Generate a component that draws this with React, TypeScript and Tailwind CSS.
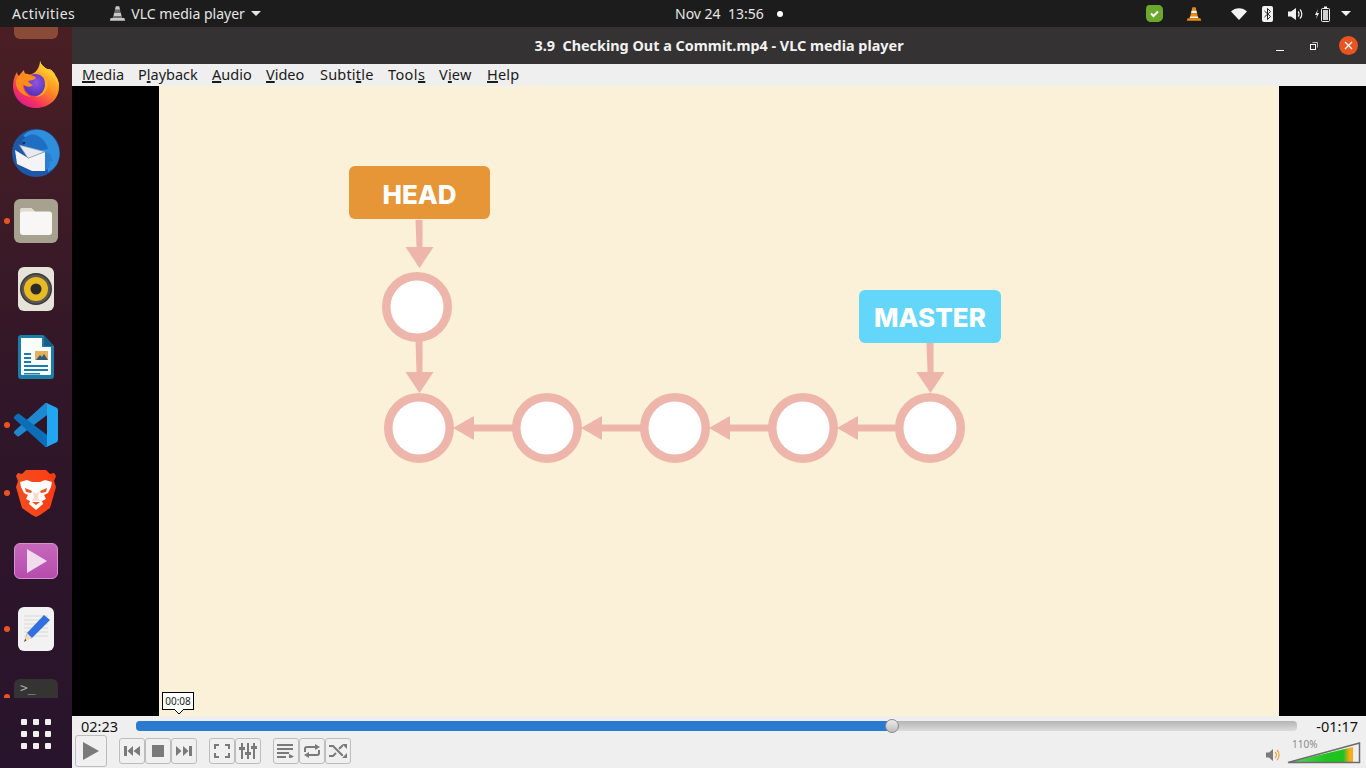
import React from "react";

function VlcCone({ color = false, size = 20 }: { color?: boolean; size?: number }) {
  const a = color ? "#f08a00" : "#c9c9c9";
  const b = color ? "#f6f1ea" : "#6f6f6f";
  return (
    <svg width={size} height={size} viewBox="0 0 20 20">
      <path d="M8 1.500h4l1 4H7z" fill={a} />
      <path d="M7 5.500h6l1 4H6z" fill={b} />
      <path d="M6 9.500h8l1 5H5z" fill={a} />
      <path d="M5.200 13h9.600l1 2.400H4.200z" fill={b} />
      <path d="M2 15.200h16l1 3.300H1z" fill={a} />
    </svg>
  );
}

function Firefox() {
  return (
    <svg width="46" height="47" viewBox="0 0 46 47" className="-mt-[2px]">
      <defs>
        <linearGradient id="ff1" x1="0.8" y1="0.05" x2="0.2" y2="0.95">
          <stop offset="0" stopColor="#ffe03b" />
          <stop offset="0.45" stopColor="#ff8a1f" />
          <stop offset="0.8" stopColor="#f5305f" />
          <stop offset="1" stopColor="#d51f95" />
        </linearGradient>
        <radialGradient id="ff2" cx="0.55" cy="0.4" r="0.7">
          <stop offset="0" stopColor="#8f55e0" />
          <stop offset="1" stopColor="#4a2ab5" />
        </radialGradient>
      </defs>
      <path d="M27 0c1 4 4 6 7 8 3 0 5 1 6 3 1 1 2 2 2 3 3 4 4 8 4 12 0 12-10 21-23 21C10 47 0 37 0 25c0-5 1-9 4-14 0 2 1 3 2 4 1-2 3-4 5-6 0 3 2 5 5 5 3-1 6-2 8-5 2-3 3-6 3-9z" fill="url(#ff1)" />
      <circle cx="22" cy="24" r="11" fill="url(#ff2)" />
      <path d="M3 20c2-6 7-8 12-7 3 1 7 2 8 4-2 2-5 2-8 3 1 2 3 3 5 4-3 3-8 2-10-1-1 4 2 10 8 13-9-1-16-8-15-16z" fill="#ff8c1a" />
      <path d="M27 0c1 4 4 6 7 8 3 0 5 1 6 3 1 1 2 2 2 3 3 4 4 8 4 12-2-6-5-10-10-13-3-1-6-2-7-3-2-3-2-7-2-10z" fill="#ffc92e" />
      <path d="M29 13c5 4 7 9 5 15-2 5-7 8-12 8 6-2 9-6 10-11 0-5-1-9-3-12z" fill="#ffab1f" />
    </svg>
  );
}

function Thunderbird() {
  return (
    <svg width="48" height="48" viewBox="0 0 48 48">
      <circle cx="24" cy="24" r="24" fill="#1c57a8" />
      <path d="M11 7C18-1 31-1 39 6c8 7 11 19 6 29-2 3-5 6-9 8-1-8-2-14-5-20-4-7-13-13-20-16z" fill="#2f8fdd" />
      <path d="M10 12c4-6 11-8 16-5 5 2 9 8 10 13l-20 4z" fill="#1e6fc4" />
      <path d="M3 21l13 8 17-6v19H20L5 35z" fill="#f4f4f6" />
      <path d="M7.300 16L33 22.700 16 29.300z" fill="#e8eaf0" stroke="#8a98ac" strokeWidth="0.700" />
      <path d="M33 23l5 2 3 7-4 1 1 5-5 4z" fill="#2a7fd2" />
      <circle cx="12" cy="14" r="1.300" fill="#1b2f55" />
    </svg>
  );
}

function Files() {
  return (
    <div className="w-11 h-11 rounded-md bg-[#a7a290] flex items-center justify-center">
      <svg width="32" height="28" viewBox="0 0 32 28">
        <path d="M0 4a3 3 0 0 1 3-3h8l4 3.500h14a3 3 0 0 1 3 3V25a3 3 0 0 1-3 3H3a3 3 0 0 1-3-3z" fill="#f8f7f5" />
        <path d="M0 4a3 3 0 0 1 3-3h8l4 3.500H3a3 3 0 0 0-3 3z" fill="#dedad0" />
      </svg>
    </div>
  );
}

function Rhythmbox() {
  return (
    <div className="w-9 h-11 rounded-md bg-[#e6e3d8] flex items-center justify-center">
      <svg width="32" height="32" viewBox="0 0 32 32">
        <circle cx="16" cy="16" r="16" fill="#3b3a38" />
        <circle cx="16" cy="16" r="14.500" fill="#5a5853" />
        <circle cx="16" cy="16" r="12" fill="#e8bb24" />
        <circle cx="16" cy="16" r="5.500" fill="#2b2a28" />
      </svg>
    </div>
  );
}

function Writer() {
  return (
    <svg width="36" height="46" viewBox="0 0 36 46">
      <path d="M3 1h22l11 11v30a3 3 0 0 1-3 3H3a3 3 0 0 1-3-3V4a3 3 0 0 1 3-3z" fill="#1b7ea8" />
      <path d="M3 4h21v9h9v27a1 1 0 0 1-1 1H4a1 1 0 0 1-1-1z" fill="#fbfdfd" />
      <path d="M26 1l10 11h-10z" fill="#14608a" />
      <rect x="17" y="17" width="13" height="9" fill="#e2b25a" />
      <path d="M18 26l4-5 2 2 2-3 4 6z" fill="#335b78" />
      <path d="M6 19h7v2H6zM6 23h7v2H6zM6 27h7v2H6zM6 31h24v2H6zM6 35h24v2H6zM6 39h16v1.500H6z" fill="#1b7ea8" />
    </svg>
  );
}

function VSCode() {
  return (
    <svg width="44" height="44" viewBox="0 0 100 100">
      <path d="M96.460 10.800 75.860.870a6.230 6.230 0 0 0-7.100 1.200L1.360 63.580a4.170 4.170 0 0 0 0 6.160l5.510 5.010a4.160 4.160 0 0 0 5.320.240L93.400 13.400c2.700-2.100 6.600-.150 6.600 3.300v-.270a6.250 6.250 0 0 0-3.540-5.630z" fill="#1f88cf" />
      <path d="M96.460 89.200 75.860 99.130a6.230 6.230 0 0 1-7.100-1.200L1.360 36.420a4.170 4.170 0 0 1 0-6.160l5.510-5.010a4.160 4.160 0 0 1 5.320-.240L93.400 86.600c2.700 2.100 6.600.150 6.600-3.300v.270a6.250 6.250 0 0 1-3.540 5.630z" fill="#0a6fb8" />
      <path d="M75.860 99.130a6.230 6.230 0 0 1-7.100-1.200c2.300 2.300 6.240.670 6.240-2.580V4.650c0-3.250-3.940-4.880-6.240-2.580a6.230 6.230 0 0 1 7.100-1.200l20.600 9.920a6.250 6.250 0 0 1 3.540 5.630v67.160a6.250 6.250 0 0 1-3.540 5.630z" fill="#22a6f0" />
    </svg>
  );
}

function Brave() {
  return (
    <svg width="40" height="47" viewBox="0 0 40 47">
      <defs>
        <linearGradient id="br" x1="0" y1="0" x2="1" y2="0">
          <stop offset="0" stopColor="#f1501f" />
          <stop offset="1" stopColor="#ff3a12" />
        </linearGradient>
      </defs>
      <path d="M10 0h20l4 4 4-1 2 3-2 5 2 6-6 21-10 7-4 2-4-2-10-7L0 17l2-6-2-5 2-3 4 1z" fill="url(#br)" />
      <path d="M4 12l7-2 5 2h8l5-2 7 2-1 5-3 6-4 2 2 4-4 2 1 3-7 6-7-6 1-3-4-2 2-4-4-2-3-6z" fill="#fff" />
      <path d="M9 18l7 3-1 2-5-1zM31 18l-7 3 1 2 5-1z" fill="#f1501f" />
      <path d="M17 21l3 3 3-3-1 7 2 3h-8l2-3z" fill="#ffd9cc" />
      <path d="M16 32h8l-4 3z" fill="#f1501f" />
    </svg>
  );
}

function VideoIcon() {
  return (
    <div className="w-11 h-9 rounded-md border border-[#d88fd0] bg-gradient-to-b from-[#c568b9] to-[#b64cae] flex items-center justify-center">
      <svg width="20" height="24" viewBox="0 0 20 24" className="ml-[2px]">
        <path d="M0 0l20 12L0 24z" fill="#f0dcee" />
      </svg>
    </div>
  );
}

function Editor() {
  return (
    <div className="w-9 h-11 rounded-md bg-[#f2f2f2] flex items-center justify-center">
      <svg width="32" height="30" viewBox="0 0 32 30">
        <path d="M4 2h24M4 6h24M4 10h24M4 14h24M4 18h24M4 22h24" stroke="#d8d8d8" strokeWidth="1" />
        <path d="M24 1l6 5-18 18-7 2 2-7z" fill="#2f6fe0" />
        <path d="M7 19l5 5-7 3z" fill="#fad9b5" />
        <path d="M5 25l1.500 1.200L4 28z" fill="#444" />
      </svg>
    </div>
  );
}

function Terminal() {
  return (
    <div className="w-11 h-9 rounded-md bg-[#353433] pl-[6px] text-[13px] leading-[18px] text-[#a8a8a8] font-['DejaVu_Sans_Mono',monospace]">
      {">_"}
    </div>
  );
}

function DockSlot({ dot, children }: { dot?: boolean; children?: React.ReactNode }) {
  return (
    <div className="relative h-[68px] shrink-0 flex items-center justify-center">
      {dot && <span className="absolute left-[4px] top-[31px] w-[6px] h-[6px] rounded-full bg-[#e95420]" />}
      {children}
    </div>
  );
}

function Dock() {
  return (
    <aside className="w-[72px] shrink-0 flex flex-col h-full bg-gradient-to-b from-[#4a1f24] via-[#301628] to-[#28142c]">
      <div className="flex-1 min-h-0 overflow-hidden">
        <div className="flex flex-col -mt-[44px]">
          <DockSlot><div className="w-11 h-11 rounded-md bg-[#8a4a38]" /></DockSlot>
          <DockSlot><Firefox /></DockSlot>
          <DockSlot><Thunderbird /></DockSlot>
          <DockSlot dot><Files /></DockSlot>
          <DockSlot><Rhythmbox /></DockSlot>
          <DockSlot><Writer /></DockSlot>
          <DockSlot dot><VSCode /></DockSlot>
          <DockSlot dot><Brave /></DockSlot>
          <DockSlot><VideoIcon /></DockSlot>
          <DockSlot dot><Editor /></DockSlot>
          <DockSlot dot><Terminal /></DockSlot>
        </div>
      </div>
      <div className="h-[70px] pt-[2px] shrink-0 flex items-center justify-center">
        <div className="grid grid-cols-3 gap-[6px]">
          {Array.from({ length: 9 }).map((_, i) => (
            <span key={i} className="w-[6px] h-[6px] rounded-[1px] bg-[#f2f0ee]" />
          ))}
        </div>
      </div>
    </aside>
  );
}

function TopBar() {
  return (
    <header className="h-[27px] shrink-0 bg-[#1c1c1c] flex items-center text-[14px] text-[#e6e6e6] relative">
      <span className="ml-[12px] tracking-[0.5px]">Activities</span>
      <span className="ml-[34px] flex items-center">
        <VlcCone size={17} />
      </span>
      <span className="ml-[5px]">VLC media player</span>
      <span className="ml-[6px] w-0 h-0 border-x-[5px] border-x-transparent border-t-[5px] border-t-[#e6e6e6]" />
      <div className="absolute left-[675px] top-0 h-[27px] flex items-center whitespace-pre">
        <span>Nov 24  13:56</span>
        <span className="ml-[13px] w-[6px] h-[6px] rounded-full bg-white" />
      </div>
      <div className="ml-auto flex items-center">
        <svg width="17" height="17" viewBox="0 0 17 17">
          <path d="M3 0h9c3 0 5 2 5 5v7c0 3-3 5-6 5H5c-3 0-5-2-5-5V4c0-2 1-4 3-4z" fill="#6aa82e" />
          <path d="M5 8.500l2.500 2.500L12 6.500" stroke="#fff" strokeWidth="2" fill="none" />
        </svg>
        <span className="ml-[23px] flex"><VlcCone color size={16} /></span>
        <svg className="ml-[29px]" width="16" height="12" viewBox="0 0 16 12">
          <path d="M0 3.500C4-1 12-1 16 3.500L8 12z" fill="#f2f2f2" />
        </svg>
        <div className="ml-[15px] w-[11px] h-[16px] rounded-[2px] bg-[#f2f2f2] flex items-center justify-center">
          <svg width="7" height="12" viewBox="0 0 7 12">
            <path d="M0.500 3l6 5.500-3 3V.500l3 3-6 5.500" stroke="#222" strokeWidth="1" fill="none" />
          </svg>
        </div>
        <svg className="ml-[15px]" width="15" height="14" viewBox="0 0 15 14">
          <path d="M0 4.500h3L8 1v12L3 9.500H0z" fill="#f2f2f2" />
          <path d="M10 4.500a3.500 3.500 0 0 1 0 5M12 2.500a6.500 6.500 0 0 1 0 9" stroke="#f2f2f2" strokeWidth="1.200" fill="none" />
        </svg>
        <svg className="ml-[12px]" width="15" height="16" viewBox="0 0 15 16">
          <path d="M3 3L0 9h2L1 13l3-6H2z" fill="#f2f2f2" />
          <rect x="6.500" y="2.500" width="8" height="13" rx="1" fill="none" stroke="#f2f2f2" />
          <rect x="8" y="4" width="5" height="10" fill="#cfcfcf" />
          <rect x="9" y="0.500" width="3" height="2" fill="#f2f2f2" />
        </svg>
        <span className="ml-[11px] mr-[15px] w-0 h-0 border-x-[5px] border-x-transparent border-t-[5px] border-t-[#f2f2f2]" />
      </div>
    </header>
  );
}

function TitleBar() {
  return (
    <div className="h-[37px] shrink-0 bg-[#343232] relative flex items-center justify-center text-[14.400px] font-bold text-[#f2f2f2] whitespace-pre">
      <span className="mt-[1px]">3.9  Checking Out a Commit.mp4 - VLC media player</span>
      <div className="absolute right-[8px] top-0 h-full flex items-center">
        <span className="w-[8px] h-[1px] bg-white mt-[10px]" />
        <svg className="ml-[26px] mt-[1px]" width="8" height="8" viewBox="0 0 8 8">
          <rect x="0.500" y="2.500" width="5" height="5" fill="none" stroke="#fff" />
          <path d="M2.500 0.500h5v5" fill="none" stroke="#bbb" />
        </svg>
        <div className="ml-[21px] w-[19px] h-[19px] rounded-full bg-[#e95420] flex items-center justify-center">
          <svg width="9" height="9" viewBox="0 0 9 9">
            <path d="M1 1l7 7M8 1l-7 7" stroke="#fff" strokeWidth="1.300" />
          </svg>
        </div>
      </div>
    </div>
  );
}

const menus: { a: string; b: string; c: string; cls: string }[] = [
  { a: "", b: "M", c: "edia", cls: "w-[56px]" },
  { a: "P", b: "l", c: "ayback", cls: "w-[74px]" },
  { a: "", b: "A", c: "udio", cls: "w-[54px]" },
  { a: "", b: "V", c: "ideo", cls: "w-[54px]" },
  { a: "Subti", b: "t", c: "le", cls: "w-[68px] tracking-[0.2px]" },
  { a: "Tool", b: "s", c: "", cls: "w-[51px] tracking-[0.4px]" },
  { a: "V", b: "i", c: "ew", cls: "w-[48px] tracking-[0.2px]" },
  { a: "", b: "H", c: "elp", cls: "w-[48px] tracking-[0.2px]" },
];

function MenuBar() {
  return (
    <nav className="h-[22px] shrink-0 bg-[#efefef] flex items-center pl-[10px] text-[14.500px] text-[#1b1b1b]">
      {menus.map((m) => (
        <span key={m.a + m.b + m.c} className={`${m.cls} whitespace-pre`}>
          {m.a}
          <span className="underline decoration-2 underline-offset-[1px]">{m.b}</span>
          {m.c}
        </span>
      ))}
    </nav>
  );
}

function Arrow({ d }: { d: string }) {
  return <path d={d} fill="#eeb5aa" />;
}

function Video() {
  const row = [419, 547, 675, 803, 930];
  return (
    <div className="flex-1 min-h-0 bg-black flex justify-center">
      <div className="relative w-[1120px] bg-[#fbf0d8]">
        <svg className="absolute left-0 top-0" width="1120" height="630" viewBox="159 86 1120 630">
          <Arrow d="M415.500 220h7v27h11l-14 21-14-21h11z" />
          <Arrow d="M415.500 340h7v32h11l-14 21-14-21h11z" />
          <Arrow d="M926.500 343h7v29h11l-14 21-14-21h11z" />
          <Arrow d="M453 428l21-12v8.500h40v7h-40v8.500z" />
          <Arrow d="M581 428l21-12v8.500h40v7h-40v8.500z" />
          <Arrow d="M709 428l21-12v8.500h40v7h-40v8.500z" />
          <Arrow d="M837 428l21-12v8.500h40v7h-40v8.500z" />
          <circle cx="417" cy="307" r="30.750" fill="#fff" stroke="#eeb5aa" strokeWidth="8.500" />
          {row.map((x) => (
            <circle key={x} cx={x} cy="428" r="30.750" fill="#fff" stroke="#eeb5aa" strokeWidth="8.500" />
          ))}
        </svg>
        <div className="absolute left-[190px] top-[80px] w-[141px] h-[53px] pt-[3px] rounded-[6px] bg-[#e69537] flex items-center justify-center text-white font-extrabold text-[26px] font-['Inter',sans-serif]">
          HEAD
        </div>
        <div className="absolute left-[700px] top-[204px] w-[142px] h-[53px] pt-[1px] rounded-[6px] bg-[#64d6fa] flex items-center justify-center text-white font-extrabold text-[26px] font-['Inter',sans-serif]">
          MASTER
        </div>
        <div className="absolute left-[3px] top-[606px] w-[32px] h-[18px] pb-[1px] bg-white border border-black flex items-center justify-center text-[10px] text-[#222] leading-none">
          00:08
          <svg className="absolute left-[11px] top-[16px]" width="10" height="7" viewBox="0 0 10 7">
            <path d="M0 0l5 5 5-5" fill="#fff" stroke="#000" />
          </svg>
        </div>
      </div>
    </div>
  );
}

function Btn({ children, wide }: { children?: React.ReactNode; wide?: boolean }) {
  return (
    <div className={`${wide ? "w-[32px] h-[32px]" : "w-[26px] h-[26px]"} rounded-[3px] border border-[#bdbdbd] bg-[#f0f0f0] flex items-center justify-center`}>
      {children}
    </div>
  );
}

const G = "#7a7a7a";

function Controls() {
  return (
    <div className="h-[52px] shrink-0 bg-[#efefef] flex flex-col relative">
      <div className="h-[19px] flex items-center pl-[9px] pr-[8px] text-[14.500px] text-[#111]">
        <span className="w-[55px] mt-[2px]">02:23</span>
        <div className="relative flex-1 h-[10px] rounded-[4px] bg-gradient-to-b from-[#b4b4b4] to-[#dcdcdc]">
          <div className="absolute left-0 top-0 h-full rounded-l-[4px] bg-[#2a7ad0] w-[756px]" />
          <div className="absolute left-[749px] -top-[2px] w-[14px] h-[14px] rounded-full bg-gradient-to-b from-[#ececec] to-[#bdbdbd] border border-[#8a8a8a]" />
        </div>
        <span className="w-[61px] text-right mt-[2px]">-01:17</span>
      </div>
      <div className="flex items-center pl-[3px] mt-[-1px] h-[33px]">
        <Btn wide>
          <svg width="18" height="20" viewBox="0 0 18 20"><path d="M1 1l16 9-16 9z" fill={G} /></svg>
        </Btn>
        <div className="w-[12px]" />
        <Btn><svg width="16" height="10" viewBox="0 0 16 10"><path d="M0 0h3v10H0zM9 0v10L3.500 5zM16 0v10L9.500 5z" fill={G} /></svg></Btn>
        <Btn><span className="w-[12px] h-[12px] bg-[#7a7a7a]" /></Btn>
        <Btn><svg width="16" height="10" viewBox="0 0 16 10"><path d="M16 0h-3v10h3zM7 0v10l5.500-5zM0 0v10l5.500-5z" fill={G} /></svg></Btn>
        <div className="w-[12px]" />
        <Btn><svg width="16" height="14" viewBox="0 0 16 14"><path d="M0 5V0h5v2H2v3zM11 0h5v5h-2V2h-3zM16 9v5h-5v-2h3V9zM5 14H0V9h2v3h3z" fill={G} /></svg></Btn>
        <Btn><svg width="18" height="16" viewBox="0 0 18 16"><path d="M2 0h2v4h2v3H4v9H2V7H0V4h2zM8 0h2v9h2v3h-2v4H8v-4H6V9h2zM14 0h2v3h2v3h-2v10h-2V6h-2V3h2z" fill={G} /></svg></Btn>
        <div className="w-[12px]" />
        <Btn><svg width="18" height="14" viewBox="0 0 18 14"><path d="M0 0h16v2H0zM0 4h16v2H0zM0 8h12v2H0zM0 12h9v2H0zM12 10l5 2.500-5 2.500z" fill={G} /></svg></Btn>
        <Btn><svg width="18" height="14" viewBox="0 0 18 14"><path d="M2 8V5a2 2 0 0 1 2-2h9M16 6v3a2 2 0 0 1-2 2H5" fill="none" stroke={G} strokeWidth="2" /><path d="M12 0l5 3-5 3zM6 8l-5 3 5 3z" fill={G} /></svg></Btn>
        <Btn><svg width="18" height="14" viewBox="0 0 18 14"><path d="M0 2h4l9 9h1M0 12h4l3-3M10 5l3-3h1" fill="none" stroke={G} strokeWidth="2" /><path d="M13 0h5v5zM13 14h5V9z" fill={G} /></svg></Btn>
        <div className="ml-auto mr-[5px] flex items-end relative h-[23px] mt-[4px]">
          <svg width="14" height="14" viewBox="0 0 14 14" className="mb-[2px] mr-[7px]">
            <path d="M0 4.500h3L7 1v12L3 9.500H0z" fill="#7a7a7a" />
            <path d="M9 4a4 4 0 0 1 0 6M11 2a7 7 0 0 1 0 10" stroke="#f29a2e" strokeWidth="1.100" fill="none" />
          </svg>
          <svg width="74" height="22" viewBox="0 0 74 22">
            <defs>
              <linearGradient id="vol" x1="0" x2="1" y1="0" y2="0">
                <stop offset="0" stopColor="#5fd35f" />
                <stop offset="0.6" stopColor="#1fc31f" />
                <stop offset="0.85" stopColor="#1fc31f" />
                <stop offset="0.95" stopColor="#ffa91a" />
                <stop offset="1" stopColor="#ffa91a" />
              </linearGradient>
            </defs>
            <path d="M1 20.500L66 5v15.500z" fill="url(#vol)" />
            <path d="M1 20.500L72.500 1v19.500z" fill="none" stroke="#6b6b6b" strokeWidth="1.500" />
          </svg>
          <span className="absolute left-[26px] top-[-2px] text-[10px] leading-none text-[#8a8a8a]">110%</span>
        </div>
      </div>
    </div>
  );
}

export default function App() {
  return (
    <div className="w-[1366px] h-[768px] overflow-hidden flex flex-col font-['Noto_Sans',sans-serif] bg-black">
      <TopBar />
      <div className="flex-1 min-h-0 flex">
        <Dock />
        <main className="flex-1 min-w-0 flex flex-col">
          <TitleBar />
          <MenuBar />
          <Video />
          <Controls />
        </main>
      </div>
    </div>
  );
}
